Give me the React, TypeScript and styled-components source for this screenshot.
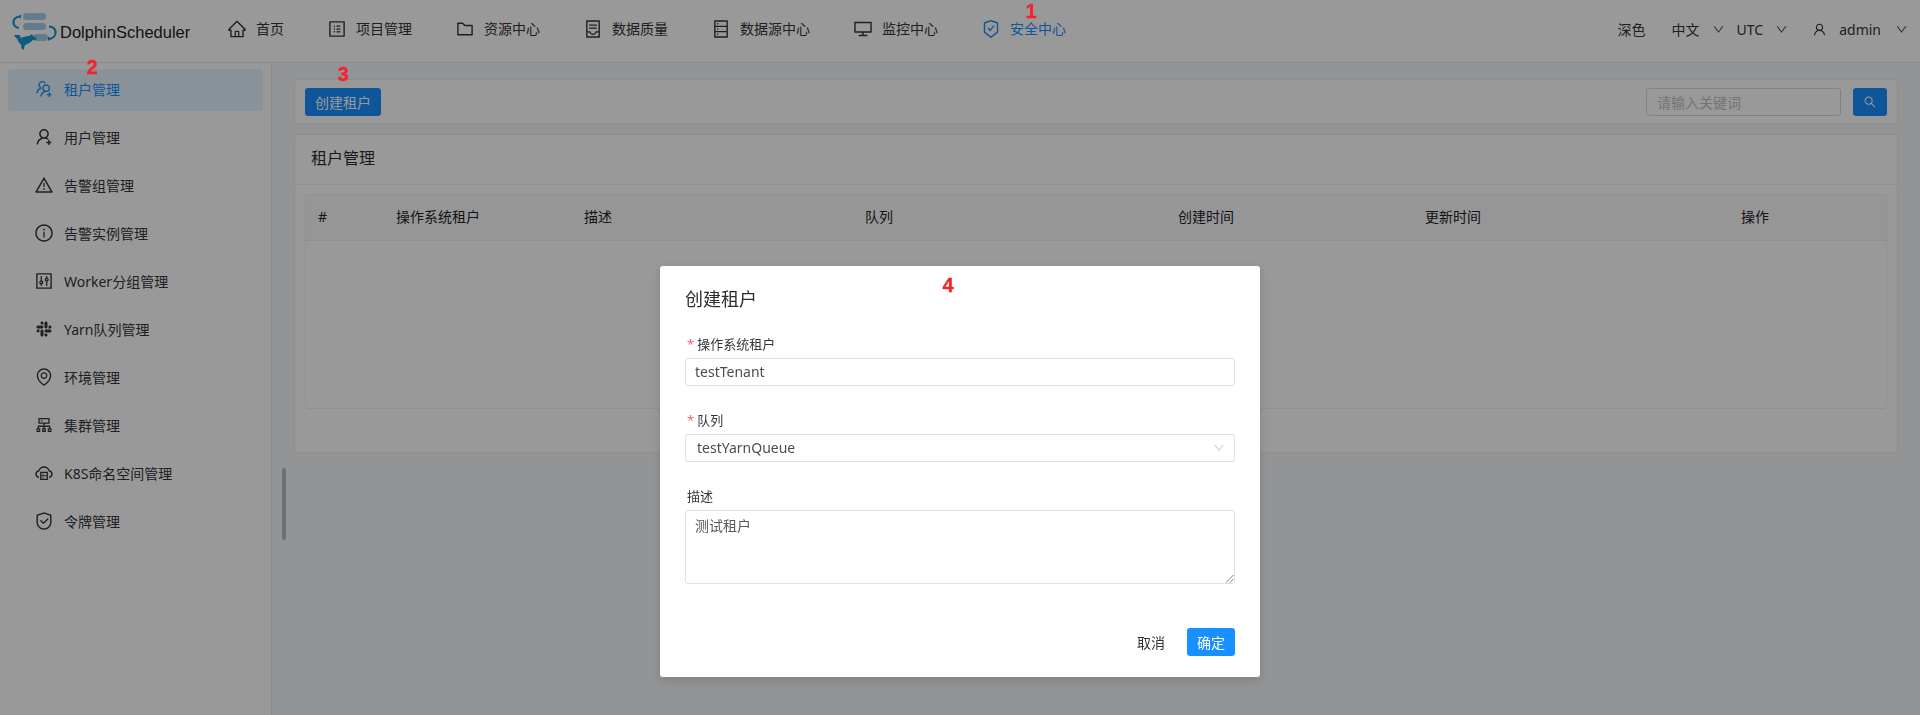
import React from 'react'
import styled, { createGlobalStyle } from 'styled-components'
import {
  AiOutlineHome,
  AiOutlineProfile,
  AiOutlineFolder,
  AiOutlineContainer,
  AiOutlineDatabase,
  AiOutlineDesktop,
  AiOutlineSafetyCertificate,
  AiOutlineUser,
  AiOutlineDown,
  AiOutlineUsergroupAdd,
  AiOutlineUserAdd,
  AiOutlineWarning,
  AiOutlineInfoCircle,
  AiOutlineControl,
  AiOutlineSlack,
  AiOutlineEnvironment,
  AiOutlineCluster,
  AiOutlineCloudServer,
  AiOutlineSafety,
  AiOutlineSearch,
} from 'react-icons/ai'

const GlobalStyle = createGlobalStyle`
  html, body {
    margin: 0;
    height: 100%;
    overflow: hidden;
    background: #f5f7fa;
  }
  body {
    font-family: "Noto Sans", "Noto Sans CJK SC", sans-serif;
    font-size: 14px;
    color: #333639;
  }
  * {
    box-sizing: border-box;
  }
`

const Page = styled.div`
  position: relative;
  width: 1920px;
  height: 715px;
  display: flex;
  flex-direction: column;
`

const Header = styled.header`
  height: 63px;
  flex: none;
  display: flex;
  align-items: center;
  background: #fff;
  border-bottom: 1px solid #e8e8f0;
`

const Logo = styled.div`
  width: 227px;
  flex: none;
  display: flex;
  align-items: center;
  padding-left: 12px;
`

const LogoText = styled.span`
  font-family: "Liberation Sans", Arial, sans-serif;
  font-size: 16.5px;
  margin-top: 3px;
  color: #1f2225;
`

const Nav = styled.nav`
  display: flex;
  align-items: center;
  gap: 43px;
  padding-bottom: 4px;
`

const NavItem = styled.div<{ $active?: boolean }>`
  display: flex;
  align-items: center;
  gap: 9px;
  line-height: 20px;
  color: ${(p) => (p.$active ? '#1890ff' : '#333639')};

  svg {
    font-size: 20px;
  }
`

const HeaderRight = styled.div`
  margin-left: auto;
  display: flex;
  align-items: center;
  padding-right: 12px;
  padding-bottom: 4px;
`

const HeaderText = styled.span<{ $gap: number }>`
  margin-right: ${(p) => p.$gap}px;
  display: flex;
  align-items: center;
`

const Chevron = styled(AiOutlineDown)<{ $gap: number }>`
  font-size: 13px;
  margin-left: ${(p) => p.$gap}px;
  color: #55585c;
`

const UserIcon = styled(AiOutlineUser)`
  font-size: 15px;
  margin-right: 12px;
`

const Body = styled.div`
  flex: 1;
  display: flex;
  min-height: 0;
`

const Sidebar = styled.aside`
  position: relative;
  width: 272px;
  flex: none;
  background: #fff;
  border-right: 1px solid #e8e8f0;
  padding: 6px 8px 0;
  display: flex;
  flex-direction: column;
  gap: 6px;
`

const MenuItem = styled.div<{ $active?: boolean }>`
  height: 42px;
  display: flex;
  align-items: center;
  gap: 10px;
  padding: 0 0 2px 26px;
  border-radius: 3px;
  background: ${(p) => (p.$active ? 'rgba(24, 144, 255, 0.1)' : 'transparent')};
  color: ${(p) => (p.$active ? '#1890ff' : '#333639')};

  svg {
    font-size: 20px;
  }
`

const ScrollThumb = styled.div`
  position: absolute;
  left: 282px;
  top: 405px;
  width: 4px;
  height: 72px;
  border-radius: 2px;
  background: rgba(0, 0, 0, 0.25);
`

const Main = styled.main`
  flex: 1;
  padding: 16px 22px 0 22px;
  display: flex;
  flex-direction: column;
  gap: 10px;
`

const Card = styled.section`
  background: #fff;
  border: 1px solid #efeff5;
  border-radius: 3px;
`

const Toolbar = styled(Card)`
  height: 45px;
  display: flex;
  align-items: center;
  padding: 0 10px;
`

const PrimaryButton = styled.button`
  height: 28px;
  padding: 0 10px;
  border: none;
  border-radius: 3px;
  background: #1890ff;
  color: #fff;
  font: inherit;
  font-size: 14px;
`

const SearchBox = styled.div`
  margin-left: auto;
  width: 195px;
  height: 28px;
  padding: 0 10px;
  display: flex;
  align-items: center;
  border: 1px solid #d9d9de;
  border-radius: 3px;
  color: #c2c2c2;
  font-size: 14px;
`

const SearchButton = styled(PrimaryButton)`
  width: 34px;
  margin-left: 12px;
  padding: 0;
  display: flex;
  align-items: center;
  justify-content: center;
`

const TableCard = styled(Card)`
  height: 319px;
`

const CardTitle = styled.h2`
  margin: 0;
  height: 50px;
  padding: 0 16px 6px;
  display: flex;
  align-items: center;
  font-size: 16px;
  font-weight: 400;
  color: #2b2e31;
  border-bottom: 1px solid #efeff5;
`

const TableWrap = styled.div`
  height: 215px;
  margin: 9px 10px 0;
  border: 1px solid #efeff5;
  border-radius: 3px;
`

const TableHead = styled.div`
  height: 46px;
  padding-bottom: 3px;
  display: grid;
  grid-template-columns: 78px 188px 281px 313px 247px 316px 1fr;
  align-items: center;
  background: #fafafc;
  border-bottom: 1px solid #efeff5;
`

const HeadCell = styled.div`
  padding-left: 12px;
  color: #1f2225;
`

const Overlay = styled.div`
  position: fixed;
  inset: 0;
  background: rgba(0, 0, 0, 0.4);
  display: flex;
  justify-content: center;
  align-items: flex-start;
  padding-top: 266px;
`

const Modal = styled.div`
  width: 600px;
  height: 411px;
  padding: 21px 25px;
  display: flex;
  flex-direction: column;
  background: #fff;
  border-radius: 3px;
  box-shadow: 0 3px 12px rgba(0, 0, 0, 0.16);
`

const ModalTitle = styled.h3`
  margin: 0 0 23px;
  font-size: 18px;
  line-height: 24px;
  font-weight: 400;
  color: #2b2e31;
`

const Field = styled.div`
  margin-bottom: 24px;
`

const Label = styled.div`
  height: 20px;
  margin-bottom: 4px;
  padding-left: 2px;
  display: flex;
  align-items: center;
  gap: 3px;
  font-size: 13px;
  line-height: 20px;
  color: #333639;
`

const Star = styled.span`
  color: #f5606d;
`

const TextInput = styled.div`
  height: 28px;
  padding: 0 9px 1px;
  display: flex;
  align-items: center;
  justify-content: space-between;
  border: 1px solid #dfdfe6;
  border-radius: 3px;
  color: #4a4d50;
`

const SelectValue = styled.span`
  padding-left: 2px;
`

const SelectArrow = styled(AiOutlineDown)`
  font-size: 12px;
  color: #c8c8cc;
`

const TextArea = styled.div`
  position: relative;
  height: 74px;
  padding: 4px 9px;
  line-height: 22px;
  border: 1px solid #dfdfe6;
  border-radius: 3px;
  color: #55585c;
`

const Resize = styled.svg`
  position: absolute;
  right: 0;
  bottom: 0;
`

const Footer = styled.div`
  margin-top: auto;
  display: flex;
  align-items: center;
  justify-content: flex-end;
  gap: 22px;
`

const CancelText = styled.span`
  color: #333639;
  font-size: 14px;
`

const ConfirmButton = styled(PrimaryButton)`
  width: 48px;
  padding: 0;
`

// the red step numbers were painted on the screenshot
const Mark = styled.span<{ $x: number; $y: number }>`
  position: absolute;
  left: ${(p) => p.$x}px;
  top: ${(p) => p.$y}px;
  transform: translate(-50%, -50%);
  font-family: "Liberation Sans", Arial, sans-serif;
  font-size: 20px;
  font-weight: 700;
  line-height: 1;
  color: #f5222d;
  -webkit-text-stroke: 0.3px #f5222d;
`

const navItems = [
  { icon: AiOutlineHome, label: '首页' },
  { icon: AiOutlineProfile, label: '项目管理' },
  { icon: AiOutlineFolder, label: '资源中心' },
  { icon: AiOutlineContainer, label: '数据质量' },
  { icon: AiOutlineDatabase, label: '数据源中心' },
  { icon: AiOutlineDesktop, label: '监控中心' },
  { icon: AiOutlineSafetyCertificate, label: '安全中心', active: true },
]

const menuItems = [
  { icon: AiOutlineUsergroupAdd, label: '租户管理', active: true },
  { icon: AiOutlineUserAdd, label: '用户管理' },
  { icon: AiOutlineWarning, label: '告警组管理' },
  { icon: AiOutlineInfoCircle, label: '告警实例管理' },
  { icon: AiOutlineControl, label: 'Worker分组管理' },
  { icon: AiOutlineSlack, label: 'Yarn队列管理' },
  { icon: AiOutlineEnvironment, label: '环境管理' },
  { icon: AiOutlineCluster, label: '集群管理' },
  { icon: AiOutlineCloudServer, label: 'K8S命名空间管理' },
  { icon: AiOutlineSafety, label: '令牌管理' },
]

const columns = ['#', '操作系统租户', '描述', '队列', '创建时间', '更新时间', '操作']

const LogoMark = () => (
  <svg width="48" height="40" viewBox="0 0 48 40" fill="none">
    <rect x="11" y="2" width="23" height="7" rx="3.5" fill="#a4cfea" />
    <rect x="11" y="12" width="23" height="7" rx="3.5" fill="#a4cfea" />
    <rect x="21" y="23" width="15" height="7" rx="3.5" fill="#a4cfea" />
    <path d="M8 5.500C3 6 1.500 9 1.500 11.500S3.500 16.500 7 17" stroke="#1a96d4" strokeWidth="2.2" />
    <path d="M9 3.500v4l-3-2z" fill="#1a96d4" />
    <path d="M37 15.500c4 .2 6.500 2.600 6.500 6s-2.500 6-6 6.300" stroke="#1a96d4" strokeWidth="2.2" />
    <path d="M36 25.500v4.500l3.500-2.300z" fill="#1a96d4" />
    <path
      d="M2 24L8 24L8.500 27C11 26 14 25 17 25L20 23L21 25C23 26 24.500 27 25 28.500L21 29C19 31 16 33 13 34L11.500 39L9 37L9.500 34C7 32 5.500 30 5.500 28C4 27 3 26 2 24Z"
      fill="#1a96d4"
    />
  </svg>
)

const App: React.FC = () => {
  return (
    <Page>
      <GlobalStyle />
      <Header>
        <Logo>
          <LogoMark />
          <LogoText>DolphinScheduler</LogoText>
        </Logo>
        <Nav>
          {navItems.map(({ icon: Icon, label, active }) => (
            <NavItem key={label} $active={active}>
              <Icon />
              {label}
            </NavItem>
          ))}
        </Nav>
        <HeaderRight>
          <HeaderText $gap={26}>深色</HeaderText>
          <HeaderText $gap={12}>
            中文
            <Chevron $gap={12} />
          </HeaderText>
          <HeaderText $gap={24}>
            UTC
            <Chevron $gap={12} />
          </HeaderText>
          <UserIcon />
          <HeaderText $gap={0}>
            admin
            <Chevron $gap={14} />
          </HeaderText>
        </HeaderRight>
      </Header>
      <Body>
        <Sidebar>
          {menuItems.map(({ icon: Icon, label, active }) => (
            <MenuItem key={label} $active={active}>
              <Icon />
              {label}
            </MenuItem>
          ))}
          <ScrollThumb />
        </Sidebar>
        <Main>
          <Toolbar>
            <PrimaryButton>创建租户</PrimaryButton>
            <SearchBox>请输入关键词</SearchBox>
            <SearchButton>
              <AiOutlineSearch />
            </SearchButton>
          </Toolbar>
          <TableCard>
            <CardTitle>租户管理</CardTitle>
            <TableWrap>
              <TableHead>
                {columns.map((c) => (
                  <HeadCell key={c}>{c}</HeadCell>
                ))}
              </TableHead>
            </TableWrap>
          </TableCard>
        </Main>
      </Body>
      <Overlay>
        <Modal>
          <ModalTitle>创建租户</ModalTitle>
          <Field>
            <Label>
              <Star>*</Star>操作系统租户
            </Label>
            <TextInput>testTenant</TextInput>
          </Field>
          <Field>
            <Label>
              <Star>*</Star>队列
            </Label>
            <TextInput>
              <SelectValue>testYarnQueue</SelectValue>
              <SelectArrow />
            </TextInput>
          </Field>
          <Field>
            <Label>描述</Label>
            <TextArea>
              测试租户
              <Resize width="9" height="9" viewBox="0 0 9 9">
                <path d="M1 8.500L8.500 1M5 8.500L8.500 5" stroke="#555" strokeWidth="0.8" />
              </Resize>
            </TextArea>
          </Field>
          <Footer>
            <CancelText>取消</CancelText>
            <ConfirmButton>确定</ConfirmButton>
          </Footer>
        </Modal>
      </Overlay>
      <Mark $x={1031} $y={11}>1</Mark>
      <Mark $x={92} $y={67}>2</Mark>
      <Mark $x={343} $y={74}>3</Mark>
      <Mark $x={948} $y={285}>4</Mark>
    </Page>
  )
}

export default App
